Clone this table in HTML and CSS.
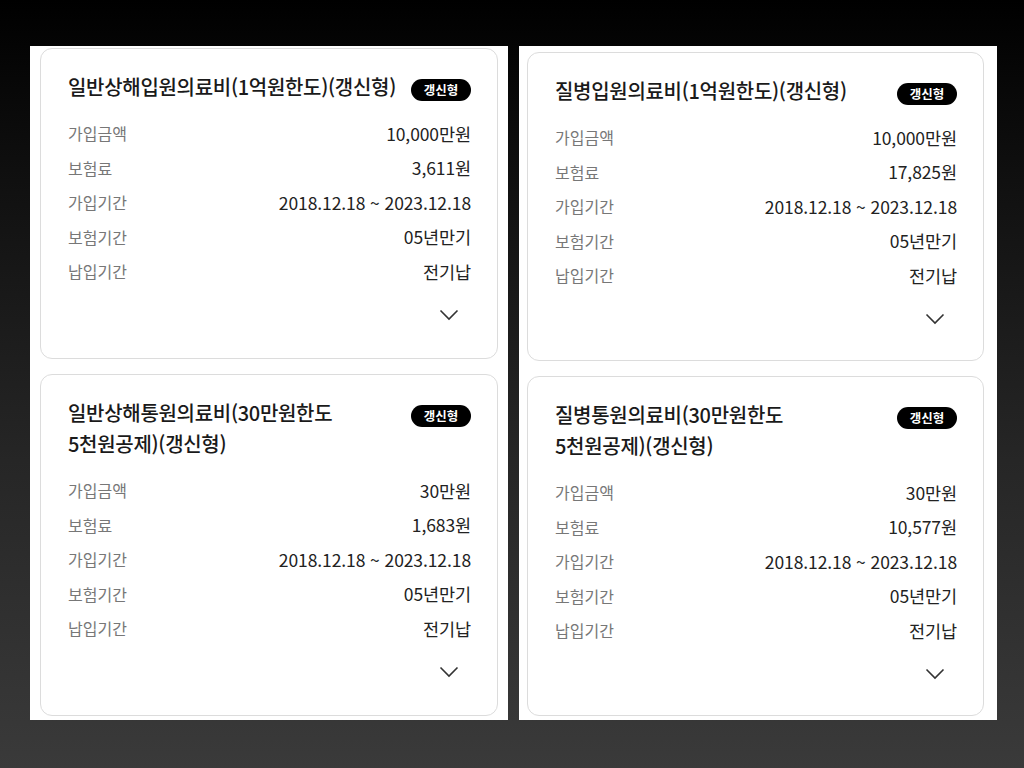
FILE: index.html
```html
<!DOCTYPE html>
<html lang="ko">
<head>
    <meta charset="UTF-8">
    <meta name="viewport" content="width=device-width, initial-scale=1.0">
    <title>보장내역</title>
    <link rel="stylesheet" href="styles.css">
</head>
<body>
    <div class="sheet left">
        <!-- 일반상해입원 -->
        <div class="card">
            <div class="card-head">
                <h2 class="card-title">일반상해입원의료비(1억원한도)(갱신형)</h2>
                <span class="badge">갱신형</span>
            </div>
            <dl class="rows">
                <div class="row"><dt>가입금액</dt><dd>10,000만원</dd></div>
                <div class="row"><dt>보험료</dt><dd>3,611원</dd></div>
                <div class="row"><dt>가입기간</dt><dd>2018.12.18 ~ 2023.12.18</dd></div>
                <div class="row"><dt>보험기간</dt><dd>05년만기</dd></div>
                <div class="row"><dt>납입기간</dt><dd>전기납</dd></div>
            </dl>
            <div class="more">
                <svg width="20" height="12" viewBox="0 0 20 12"><path d="M1.5 1.5 L10 10 L18.5 1.5" fill="none" stroke="#333" stroke-width="1.6"/></svg>
            </div>
        </div>
        <!-- 일반상해통원 -->
        <div class="card">
            <div class="card-head">
                <h2 class="card-title">일반상해통원의료비(30만원한도<br>5천원공제)(갱신형)</h2>
                <span class="badge">갱신형</span>
            </div>
            <dl class="rows">
                <div class="row"><dt>가입금액</dt><dd>30만원</dd></div>
                <div class="row"><dt>보험료</dt><dd>1,683원</dd></div>
                <div class="row"><dt>가입기간</dt><dd>2018.12.18 ~ 2023.12.18</dd></div>
                <div class="row"><dt>보험기간</dt><dd>05년만기</dd></div>
                <div class="row"><dt>납입기간</dt><dd>전기납</dd></div>
            </dl>
            <div class="more">
                <svg width="20" height="12" viewBox="0 0 20 12"><path d="M1.5 1.5 L10 10 L18.5 1.5" fill="none" stroke="#333" stroke-width="1.6"/></svg>
            </div>
        </div>
    </div>

    <div class="sheet right">
        <!-- 질병입원 -->
        <div class="card">
            <div class="card-head">
                <h2 class="card-title">질병입원의료비(1억원한도)(갱신형)</h2>
                <span class="badge">갱신형</span>
            </div>
            <dl class="rows">
                <div class="row"><dt>가입금액</dt><dd>10,000만원</dd></div>
                <div class="row"><dt>보험료</dt><dd>17,825원</dd></div>
                <div class="row"><dt>가입기간</dt><dd>2018.12.18 ~ 2023.12.18</dd></div>
                <div class="row"><dt>보험기간</dt><dd>05년만기</dd></div>
                <div class="row"><dt>납입기간</dt><dd>전기납</dd></div>
            </dl>
            <div class="more">
                <svg width="20" height="12" viewBox="0 0 20 12"><path d="M1.5 1.5 L10 10 L18.5 1.5" fill="none" stroke="#333" stroke-width="1.6"/></svg>
            </div>
        </div>
        <!-- 질병통원 -->
        <div class="card">
            <div class="card-head">
                <h2 class="card-title">질병통원의료비(30만원한도<br>5천원공제)(갱신형)</h2>
                <span class="badge">갱신형</span>
            </div>
            <dl class="rows">
                <div class="row"><dt>가입금액</dt><dd>30만원</dd></div>
                <div class="row"><dt>보험료</dt><dd>10,577원</dd></div>
                <div class="row"><dt>가입기간</dt><dd>2018.12.18 ~ 2023.12.18</dd></div>
                <div class="row"><dt>보험기간</dt><dd>05년만기</dd></div>
                <div class="row"><dt>납입기간</dt><dd>전기납</dd></div>
            </dl>
            <div class="more">
                <svg width="20" height="12" viewBox="0 0 20 12"><path d="M1.5 1.5 L10 10 L18.5 1.5" fill="none" stroke="#333" stroke-width="1.6"/></svg>
            </div>
        </div>
    </div>
</body>
</html>
```

FILE: styles.css
```css
html, body {
    margin: 0;
    height: 768px;
}
body {
    background: linear-gradient(to bottom, #000 0%, #111 25%, #262626 60%, #3a3a3a 100%);
    font-family: "Noto Sans CJK KR", "Noto Sans", sans-serif;
    display: flex;
    align-items: flex-start;
    gap: 11px;
    padding: 46px 0 0 30px;
    box-sizing: border-box;
    overflow: hidden;
}
.sheet {
    background-color: #fff;
    height: 674px;
    box-sizing: border-box;
    display: flex;
    flex-direction: column;
    gap: 15px;
}
.left {
    width: 478px;
    padding: 2px 10px 0 10px;
}
.right {
    width: 478px;
    padding: 6px 13px 0 8px;
}
.card {
    border: 1.5px solid #dcdcdc;
    border-radius: 12px;
    padding: 22px 26px 0 27px;
}
.card-head {
    display: flex;
    justify-content: space-between;
    align-items: flex-start;
}
.card-title {
    margin: 0;
    font-size: 20px;
    font-weight: 500;
    line-height: 31px;
    color: #1a1a1a;
    letter-spacing: -0.3px;
}
.badge {
    background-color: #000;
    color: #fff;
    font-size: 12.5px;
    font-weight: bold;
    border-radius: 11px;
    height: 22px;
    line-height: 22px;
    width: 60px;
    text-align: center;
    margin-top: 8px;
    flex-shrink: 0;
}
.rows {
    margin: 14px 0 0 0;
}
.row {
    display: flex;
    justify-content: space-between;
    align-items: center;
    height: 34.5px;
}
.row dt {
    color: #777;
    font-size: 16px;
}
.row dd {
    margin: 0;
    color: #222;
    font-size: 17.5px;
    letter-spacing: -0.1px;
}
.more {
    display: flex;
    justify-content: flex-end;
    padding: 20px 12px 37.5px 0;
}
.right .more {
    padding-bottom: 35.5px;
}
.more svg {
    display: block;
}
```
